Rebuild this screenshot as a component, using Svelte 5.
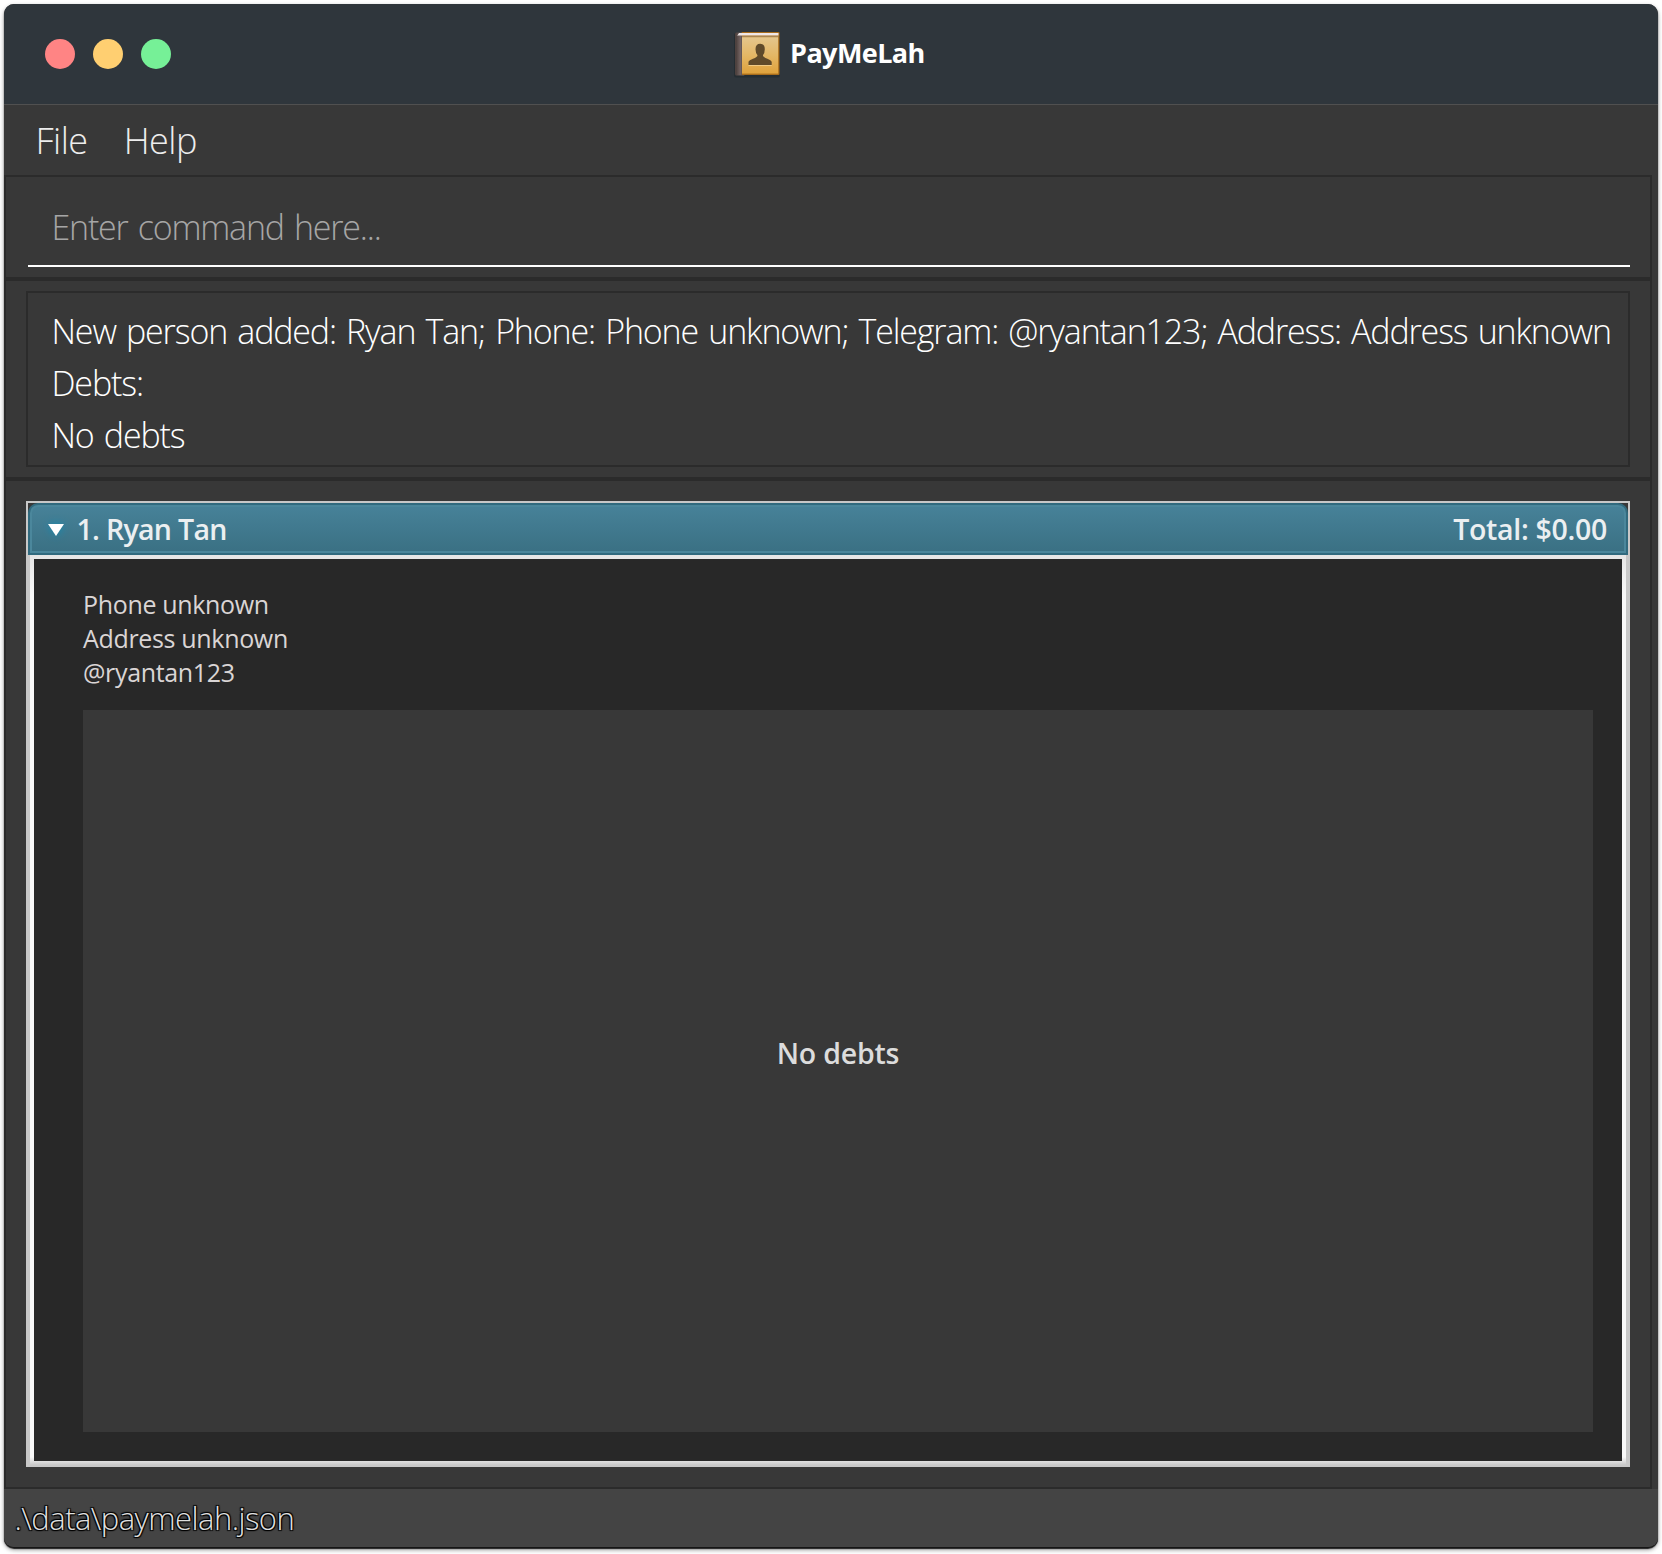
<script>
  const menus = ['File', 'Help'];
  const result = [
    'New person added: Ryan Tan; Phone: Phone unknown; Telegram: @ryantan123; Address: Address unknown',
    'Debts:',
    'No debts'
  ];
  const details = ['Phone unknown', 'Address unknown', '@ryantan123'];
</script>

<main>
  <div class="window">
    <header class="titlebar">
      <div class="lights">
        <i class="red"></i><i class="amber"></i><i class="green"></i>
      </div>
      <div class="brand">
        <svg width="50" height="48" viewBox="0 0 50 48" aria-hidden="true">
          <defs>
            <linearGradient id="cover" x1="0" y1="0" x2="0" y2="1">
              <stop offset="0" stop-color="#e4c68d" />
              <stop offset="0.5" stop-color="#e4b765" />
              <stop offset="1" stop-color="#dfa23c" />
            </linearGradient>
            <linearGradient id="spine" x1="0" y1="0" x2="1" y2="0">
              <stop offset="0" stop-color="#4b3f3c" />
              <stop offset="0.55" stop-color="#6a5b59" />
              <stop offset="0.85" stop-color="#74676a" />
              <stop offset="1" stop-color="#514541" />
            </linearGradient>
          </defs>
          <rect x="1" y="2" width="46" height="44.5" rx="2" fill="#20282b" opacity="0.6" />
          <rect x="2" y="1.5" width="10" height="43" rx="1.5" fill="url(#spine)" />
          <rect x="8.5" y="1" width="38" height="43" rx="1" fill="#a86c1b" />
          <path d="M4 5 6 2H45.500V4.500H4z" fill="#efe7e7" />
          <rect x="9" y="5" width="36.500" height="1.2" fill="#a98652" />
          <rect x="9" y="6.2" width="36.2" height="36.4" fill="url(#cover)" />
          <path d="M3 5H9V44H3z" fill="url(#spine)" />
          <path d="M15.500 34V30.800Q16 29.200 20 27.700Q24.500 26.300 24.500 24.300Q22.500 22 22.500 18.300Q22.500 12.800 27.200 12.800Q31.800 12.800 31.800 18.300Q31.800 22 29.900 24.300Q29.900 26.300 34.400 27.700Q38.200 29.200 38.700 30.800V34Z" fill="#5f4a2a" />
          <path d="M15.500 34.500H38.700" stroke="#f0ca84" stroke-width="1" />
        </svg>
        <span>PayMeLah</span>
      </div>
    </header>

    <nav>
      {#each menus as m}<span>{m}</span>{/each}
    </nav>

    <section class="pane command">
      <div class="input">Enter command here...</div>
    </section>

    <section class="pane output">
      <div class="result">
        {#each result as line}<p>{line}</p>{/each}
      </div>
    </section>

    <section class="pane people">
      <div class="list">
        <div class="head">
          <svg class="arrow" width="16" height="12" viewBox="0 0 16 12" aria-hidden="true">
            <path d="M0 0H16L8 12Z" fill="#fff" />
          </svg>
          <span class="name">1. Ryan Tan</span>
          <span class="total">Total: $0.00</span>
        </div>
        <div class="frame">
          <div class="card">
            {#each details as d}<p>{d}</p>{/each}
            <div class="empty"><span>No debts</span></div>
          </div>
        </div>
      </div>
    </section>

    <footer>.\data\paymelah.json</footer>
  </div>
</main>

<style>
  :global(body) { background: #fff; }
  main {
    box-sizing: border-box;
    height: 1554px;
    padding: 4px 4px 6px;
    font-family: "Open Sans", "Noto Sans", sans-serif;
    overflow: hidden;
  }
  p { margin: 0; }
  .window {
    box-sizing: border-box;
    width: 1654px;
    height: 1544px;
    display: flex;
    flex-direction: column;
    background: #383838;
    border-radius: 10px;
    overflow: hidden;
    border-bottom: 1px solid #161616;
    box-shadow: 0 1px 1px #222, 0 2px 4px rgba(0, 0, 0, 0.4);
  }
  .titlebar {
    box-sizing: border-box;
    height: 101px;
    flex: none;
    display: grid;
    grid-template-columns: 729px auto;
    align-items: center;
    background: #2f363c;
    border-bottom: 1px solid #505050;
  }
  .lights { display: flex; gap: 18px; padding-left: 41px; }
  .lights i { width: 30px; height: 30px; border-radius: 50%; }
  .red { background: #ff8484; }
  .amber { background: #ffcf71; }
  .green { background: #76f097; }
  .brand { display: flex; align-items: center; padding-top: 1px; }
  .brand span {
    margin: -4px 0 0 7px;
    font-size: 27px;
    font-weight: 700;
    letter-spacing: -0.57px;
    color: #fff;
  }
  nav {
    height: 70px;
    flex: none;
    display: flex;
    gap: 36px;
    padding-left: 31.5px;
    line-height: 71px;
    font-size: 36px;
    font-weight: 300;
    letter-spacing: -0.5px;
    color: #ededed;
  }
  .pane {
    box-sizing: border-box;
    width: 1648px;
    flex: none;
    border: 2px solid #2b2b2b;
    padding-left: 20px;
    padding-right: 20px;
  }
  .command { height: 104px; padding-top: 10px; padding-left: 22px; }
  .input {
    box-sizing: border-box;
    height: 80px;
    padding: 14px 0 0 23.5px;
    border-bottom: 2px solid #fff;
    line-height: 52px;
    font-size: 34px;
    font-weight: 300;
    letter-spacing: -1.2px;
    word-spacing: 2.5px;
    color: #a6a6a6;
  }
  .output { height: 200px; padding-top: 10px; }
  .result {
    box-sizing: border-box;
    height: 176px;
    border: 2px solid #2b2b2b;
    padding: 12px 0 0 23.5px;
    line-height: 52px;
    font-size: 34px;
    font-weight: 300;
    letter-spacing: -1.15px;
    word-spacing: 2.5px;
    color: #fff;
    white-space: nowrap;
  }
  .people { height: 1010px; padding-top: 20px; }
  .list {
    box-sizing: border-box;
    height: 966px;
    display: flex;
    flex-direction: column;
    border: 2px solid #c8c8c8;
  }
  .head {
    box-sizing: border-box;
    height: 52px;
    flex: none;
    display: flex;
    align-items: center;
    padding: 0 19px 1px 18px;
    border: 2px solid #316a7e;
    border-radius: 10px 10px 0 0;
    background: linear-gradient(#478299, #3a7083);
    box-shadow: inset 0 0 0 2px #4b879c;
    font-size: 28.5px;
    font-weight: 600;
    color: #ebeff1;
  }
  .arrow { overflow: visible; margin-top: 3px; filter: drop-shadow(0 0 4px #0d8cb4); }
  .name { margin-left: 12.5px; letter-spacing: -0.8px; word-spacing: 0.5px; }
  .total { margin-left: auto; letter-spacing: -0.3px; }
  .frame {
    flex: 1;
    display: flex;
    box-sizing: border-box;
    border: solid #c8c8c8;
    border-width: 0 2px 2px;
    padding: 4px;
    background: linear-gradient(#e6e6e6, #f9f9f9 40px, #f9f9f9 calc(100% - 8px), #c8c8c8);
  }
  .card {
    flex: 1;
    box-sizing: border-box;
    padding: 28px 29px 29px 49px;
    background: #282828;
    line-height: 34.2px;
    font-size: 25px;
    letter-spacing: -0.33px;
    color: #dad5d5;
  }
  .empty {
    box-sizing: border-box;
    height: 722px;
    margin-top: 20.4px;
    padding-bottom: 35px;
    display: flex;
    align-items: center;
    justify-content: center;
    background: #383838;
    font-size: 28.5px;
    font-weight: 600;
    letter-spacing: -0.2px;
    color: #dcdcdc;
  }
  footer {
    flex: 1;
    padding-left: 10.5px;
    background: #444;
    line-height: 58px;
    font-size: 31px;
    font-weight: 300;
    letter-spacing: -0.55px;
    color: #e0e0e0;
    text-shadow: 1px 1px 1px #000, -1px -1px 1px #000, 1px -1px 1px #000, -1px 1px 1px #000;
  }
</style>
